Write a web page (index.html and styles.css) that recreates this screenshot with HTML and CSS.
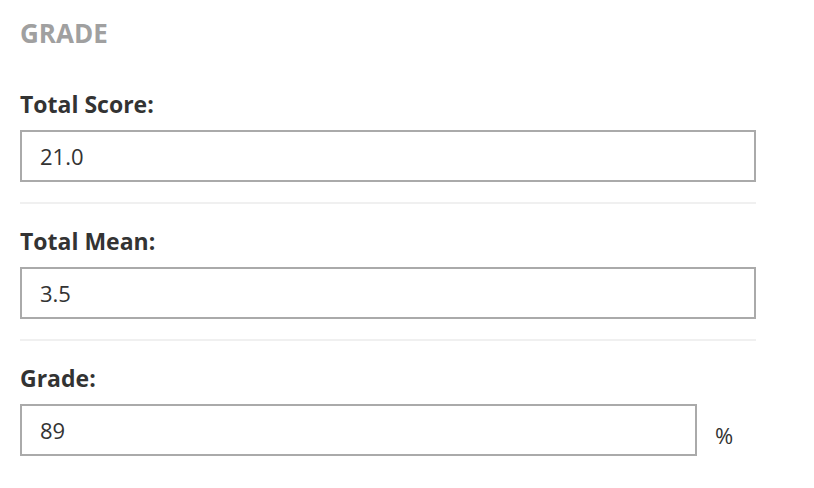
FILE: index.html
```html
<!DOCTYPE html>
<html lang="en">
<head>
    <meta charset="UTF-8">
    <meta name="viewport" content="width=device-width, initial-scale=1.0">
    <title>Grade</title>
    <link rel="stylesheet" href="styles.css">
</head>
<body>
    <div class="grade-panel">
        <h2 class="grade-title">GRADE</h2>

        <div class="grade-field">
            <label class="grade-label" for="total-score">Total Score:</label>
            <input class="grade-input" id="total-score" type="text" value="21.0" readonly>
        </div>

        <div class="grade-field">
            <label class="grade-label" for="total-mean">Total Mean:</label>
            <input class="grade-input" id="total-mean" type="text" value="3.5" readonly>
        </div>

        <div class="grade-field last">
            <label class="grade-label" for="grade">Grade:</label>
            <div class="grade-row">
                <input class="grade-input short" id="grade" type="text" value="89" readonly>
                <span class="grade-unit">%</span>
            </div>
        </div>
    </div>
</body>
</html>
```

FILE: styles.css
```css
body {
    font-family: "Open Sans", Arial, sans-serif;
    margin: 0;
    padding: 0;
    background-color: #fff;
    color: #333;
}

.grade-panel {
    width: 736px;
    padding: 16px 0 0 20px;
}

.grade-title {
    margin: 0 0 38px;
    font-size: 26px;
    line-height: 34px;
    font-weight: 700;
    color: #a0a0a0;
}

.grade-field {
    display: flex;
    flex-direction: column;
    gap: 10px;
    padding-bottom: 20px;
    margin-bottom: 21px;
    border-bottom: 2px solid #f0f0f0;
}

.grade-field.last {
    border-bottom: none;
}

.grade-label {
    font-size: 23px;
    line-height: 32px;
    font-weight: 700;
    color: #333;
}

.grade-input {
    box-sizing: border-box;
    width: 100%;
    height: 52px;
    margin: 0;
    padding: 0 18px;
    border: 2px solid #aaa;
    border-radius: 0;
    outline: none;
    font-family: "Open Sans", Arial, sans-serif;
    font-size: 22px;
    color: #333;
    background-color: #fff;
}

.grade-row {
    display: flex;
    align-items: center;
}

.grade-input.short {
    width: 677px;
}

.grade-unit {
    margin-left: 18px;
    padding-top: 10px;
    font-size: 22px;
    color: #333;
}
```
